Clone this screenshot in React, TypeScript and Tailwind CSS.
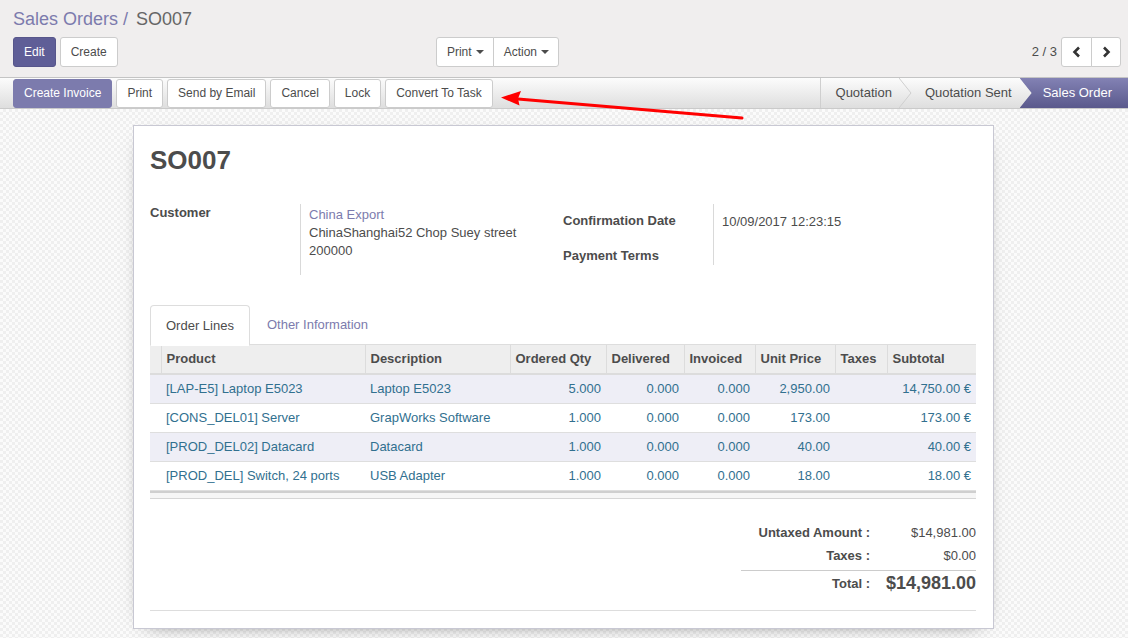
import React from "react";

const rows = [
  ["[LAP-E5] Laptop E5023", "Laptop E5023", "5.000", "0.000", "0.000", "2,950.00", "", "14,750.00 €"],
  ["[CONS_DEL01] Server", "GrapWorks Software", "1.000", "0.000", "0.000", "173.00", "", "173.00 €"],
  ["[PROD_DEL02] Datacard", "Datacard", "1.000", "0.000", "0.000", "40.00", "", "40.00 €"],
  ["[PROD_DEL] Switch, 24 ports", "USB Adapter", "1.000", "0.000", "0.000", "18.00", "", "18.00 €"],
];

const cols = [
  { w: 11, label: "", right: false },
  { w: 204, label: "Product", right: false },
  { w: 145, label: "Description", right: false },
  { w: 96, label: "Ordered Qty", right: true },
  { w: 78, label: "Delivered", right: true },
  { w: 71, label: "Invoiced", right: true },
  { w: 80, label: "Unit Price", right: true },
  { w: 52, label: "Taxes", right: true },
  { w: 89, label: "Subtotal", right: true },
];

function Caret() {
  return <span className="ml-[4px] inline-block h-0 w-0 border-x-[4px] border-t-[4px] border-x-transparent border-t-[#4c4c4c] align-middle" />;
}

function Chev({ dir }: { dir: "l" | "r" }) {
  return (
    <svg width="10" height="12" viewBox="0 0 10 12">
      <path
        d={dir === "l" ? "M7 1.5 L2.5 6 L7 10.5" : "M3 1.5 L7.5 6 L3 10.5"}
        fill="none"
        stroke="#333"
        strokeWidth="2.6"
        strokeLinejoin="miter"
      />
    </svg>
  );
}

export default function App() {
  return (
    <div className="relative flex h-[638px] w-[1128px] flex-col overflow-hidden bg-[#f7f7f7] font-['Liberation_Sans',Arial,sans-serif] text-[13px] text-[#4c4c4c]">
      {/* Control panel */}
      <div className="border-b border-[#c4c4c4] bg-[#f0eeee] pb-[10px] pl-[13px] pr-[7px] pt-[7px]">
        <div className="text-[18px] leading-[24px]">
          <span className="text-[#7c7bad]">Sales Orders</span>
          <span className="text-[#7c7bad]"> / </span>
          <span className="ml-[3px] text-[#666]">SO007</span>
        </div>
        <div className="mt-[6px] flex h-[30px] items-center">
          <div className="flex w-[546px] items-center justify-between">
            <div className="flex gap-[4px]">
              <button className="h-[30px] rounded-[3px] border border-[#57568b] bg-[#5f5e97] px-[10px] text-[12px] text-white">Edit</button>
              <button className="h-[30px] rounded-[3px] border border-[#ccc] bg-white px-[10px] text-[12px] text-[#4c4c4c]">Create</button>
            </div>
            <div className="flex">
              <button className="flex h-[30px] items-center rounded-l-[3px] border border-[#ccc] bg-white pl-[10px] pr-[9px] text-[12px]">Print<Caret /></button>
              <button className="-ml-px flex h-[30px] items-center rounded-r-[3px] border border-[#ccc] bg-white pl-[10px] pr-[9px] text-[12px]">Action<Caret /></button>
            </div>
          </div>
          <div className="ml-auto flex items-center">
            <span className="mr-[4px] text-[13px]">2 / 3</span>
            <div className="flex">
              <button className="flex h-[30px] w-[31px] items-center justify-center rounded-l-[3px] border border-[#ccc] bg-white"><Chev dir="l" /></button>
              <button className="-ml-px flex h-[30px] w-[30px] items-center justify-center rounded-r-[3px] border border-[#ccc] bg-white"><Chev dir="r" /></button>
            </div>
          </div>
        </div>
      </div>

      {/* Statusbar */}
      <div className="flex h-[31px] items-center border-b border-[#cacaca] bg-gradient-to-b from-[#fcfcfc] to-[#dedede] pl-[13px]">
        <div className="flex gap-[4px] text-[12px]">
          <button className="h-[29px] rounded-[3px] border border-[#7c7bad] bg-[#7c7bad] px-[10px] text-white">Create Invoice</button>
          <button className="h-[29px] rounded-[3px] border border-[#ccc] bg-white px-[10px]">Print</button>
          <button className="h-[29px] rounded-[3px] border border-[#ccc] bg-white px-[10px]">Send by Email</button>
          <button className="h-[29px] rounded-[3px] border border-[#ccc] bg-white px-[10px]">Cancel</button>
          <button className="h-[29px] rounded-[3px] border border-[#ccc] bg-white px-[10px]">Lock</button>
          <button className="h-[29px] rounded-[3px] border border-[#ccc] bg-white px-[10px]">Convert To Task</button>
        </div>
        <div className="ml-auto flex h-full border-l border-[#cfcfcf] text-[13px]">
          <div className="flex items-center pl-[15px] pr-[7px]">Quotation</div>
          <svg width="13" height="30" viewBox="0 0 13 30" className="shrink-0">
            <path d="M0 0 L12 15 L0 30" fill="none" stroke="#cfcfcf" strokeWidth="1" />
          </svg>
          <div className="flex items-center pl-[13px] pr-[8px]">Quotation Sent</div>
          <div className="flex h-full items-center bg-gradient-to-b from-[#8382b4] to-[#5a598c] pl-[23px] pr-[16px] text-white [clip-path:polygon(0_0,100%_0,100%_100%,0_100%,12px_50%)]">
            Sales Order
          </div>
        </div>
      </div>

      {/* Sheet background */}
      <div className="flex-1 bg-[repeating-conic-gradient(#efefef_0%_25%,#fbfbfb_0%_50%)] bg-[length:6px_6px] pt-[16px]">
        <div className="ml-[133px] w-[861px] border border-[#c8c8d3] bg-white pb-[17px] pl-[16px] pr-[17px] pt-[20px] shadow-[0_5px_20px_-15px_black]">
          <h1 className="text-[26px] font-bold leading-[28px] text-[#4c4c4c]">SO007</h1>

          {/* groups */}
          <div className="mt-[30px] flex">
            <div className="flex w-[413px]">
              <div className="w-[150px] font-bold leading-[18px]">Customer</div>
              <div className="h-[71px] border-l border-[#d9d9d9] pl-[8px] pt-[2px] leading-[18px]">
                <div className="text-[#7c7bad]">China Export</div>
                <div>ChinaShanghai52 Chop Suey street</div>
                <div>200000</div>
              </div>
            </div>
            <div className="flex flex-col">
              <div className="flex h-[34px]">
                <div className="w-[150px] pt-[8px] font-bold leading-[18px]">Confirmation Date</div>
                <div className="border-l border-[#d9d9d9] pl-[8px] pt-[9px] leading-[18px]">10/09/2017 12:23:15</div>
              </div>
              <div className="flex h-[27px]">
                <div className="w-[150px] pt-[9px] font-bold leading-[18px]">Payment Terms</div>
                <div className="border-l border-[#d9d9d9] pl-[8px]"></div>
              </div>
            </div>
          </div>

          {/* tabs */}
          <div className="mt-[30px] flex h-[40px] border-b border-[#ddd]">
            <div className="-mb-px flex h-[41px] items-center rounded-t-[4px] border border-[#ddd] border-b-white bg-white px-[15px]">Order Lines</div>
            <div className="ml-[2px] flex h-[40px] items-center px-[15px] text-[#7c7bad]">Other Information</div>
          </div>

          {/* table */}
          <table className="w-full table-fixed border-collapse">
            <colgroup>
              {cols.map((c, i) => (
                <col key={i} style={{ width: c.w }} />
              ))}
            </colgroup>
            <thead>
              <tr className="h-[29px] border-b-2 border-[#dcdcdc] bg-[#eeeeee]">
                {cols.map((c, i) => (
                  <th
                    key={i}
                    className={`px-[5px] text-left font-bold ${i > 0 ? "border-l border-[#dcdcdc]" : ""}`}
                  >
                    {c.label}
                  </th>
                ))}
              </tr>
            </thead>
            <tbody>
              {rows.map((r, ri) => (
                <tr key={ri} className={`h-[29px] border-b border-[#dedede] text-[#31708f] ${ri % 2 === 0 ? "bg-[#eeeef6]" : "bg-white"}`}>
                  <td></td>
                  {r.map((v, ci) => (
                    <td
                      key={ci}
                      className={`whitespace-nowrap px-[5px] ${cols[ci + 1].right ? "text-right" : "text-left"}`}
                    >
                      {v}
                    </td>
                  ))}
                </tr>
              ))}
            </tbody>
          </table>
          <div className="h-[8px] border-b border-t-2 border-b-[#d6d6d6] border-t-[#cfcfcf] bg-[#f6f6f6]" />

          {/* totals */}
          <div className="mt-[25px] flex justify-end">
            <div className="w-[235px]">
              <div className="grid grid-cols-[1fr_100px] leading-[18px]">
                <div className="pr-[6px] text-right font-bold">Untaxed Amount :</div>
                <div className="text-right">$14,981.00</div>
              </div>
              <div className="mt-[5px] grid grid-cols-[1fr_100px] leading-[18px]">
                <div className="pr-[6px] text-right font-bold">Taxes :</div>
                <div className="text-right">$0.00</div>
              </div>
              <div className="mt-[5px] grid grid-cols-[1fr_100px] items-center border-t border-[#cccccc] leading-[22px]">
                <div className="pr-[6px] pt-[2px] text-right font-bold">Total :</div>
                <div className="text-right text-[18px] font-bold">$14,981.00</div>
              </div>
            </div>
          </div>

          <div className="mt-[15px] border-t border-[#dddddd]" />
        </div>
      </div>

      {/* annotation arrow */}
      <svg className="pointer-events-none absolute left-0 top-0" width="1128" height="638" viewBox="0 0 1128 638">
        <line x1="742" y1="118" x2="512" y2="98.5" stroke="#ff0000" strokeWidth="3" strokeLinecap="round" />
        <path d="M501 97.5 L521 91 L518 98.5 L519.5 105.5 Z" fill="#ff0000" />
      </svg>
    </div>
  );
}
